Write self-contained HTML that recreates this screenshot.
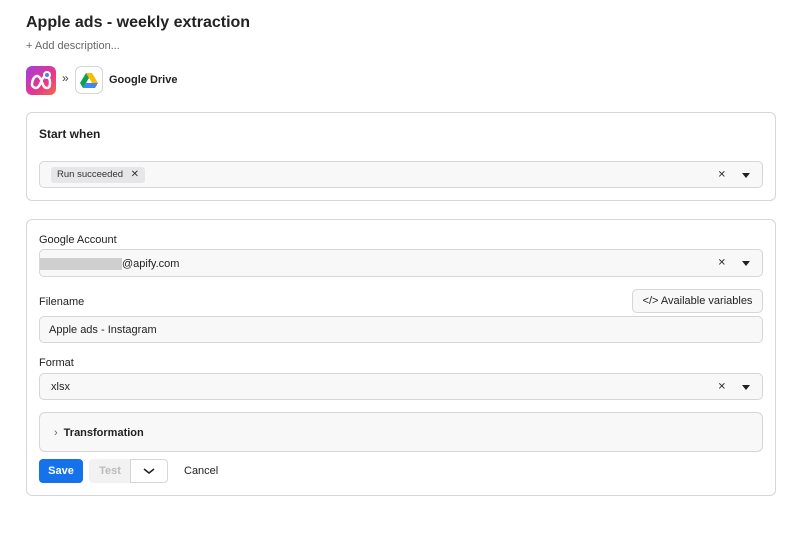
<!DOCTYPE html>
<html><head><style>
*{box-sizing:border-box;margin:0;padding:0}
body{width:802px;height:550px;background:#fff;font-family:"Liberation Sans",sans-serif;color:#1f1f1f;position:relative;overflow:hidden}
.abs{position:absolute}
h1{position:absolute;left:26px;top:14px;font-size:16px;font-weight:bold;color:#222}
.card{position:absolute;left:26px;width:750px;border:1px solid #d6d6da;border-radius:6px;background:#fff}
.inp{position:absolute;left:39px;width:724px;border:1px solid #d6d6da;border-radius:5px;background:#f8f8f9;font-size:11px;color:#222}
.lbl{position:absolute;left:39px;font-size:11px;color:#222}
.x{position:absolute;right:36px;top:50%;transform:translateY(-50%);font-size:10px;color:#333}
.caret{position:absolute;right:12px;top:50%;margin-top:-2px;width:0;height:0;border-left:4px solid transparent;border-right:4px solid transparent;border-top:5px solid #222}
</style></head><body>
<h1>Apple ads - weekly extraction</h1>
<div class="abs" style="left:26px;top:40px;font-size:11px;color:#666">+ Add description...</div>
<div class="abs" style="left:26px;top:66px;width:30px;height:29px;border-radius:6px;background:linear-gradient(135deg,#a13fe0,#e8378a 60%,#f06a4b)">
<svg width="30" height="29" viewBox="0 0 30 29"><path d="M6 19c0-6 3-9 5-9s4 3 5 6 2 6 5 6 3-3 3-6-2-6-4-6-4 3-5 6-3 6-5 6-4-2-4-3z" fill="none" stroke="#fff" stroke-width="2.5"/><circle cx="21" cy="9" r="4" fill="#fff"/><circle cx="21" cy="9" r="2" fill="#4c7ff0"/></svg></div>
<div class="abs" style="left:62px;top:71px;font-size:12px;color:#444">»</div>
<div class="abs" style="left:75px;top:66px;width:28px;height:28px;border:1px solid #d6d6da;border-radius:6px;background:#fff">
<svg width="26" height="26" viewBox="0 0 26 26"><path d="M10 6h6l6 10h-6z" fill="#fbbc04"/><path d="M10 6l-6 10 3 5 6-10z" fill="#0f9d58"/><path d="M7 21h12l3-5H10z" fill="#4285f4"/></svg></div>
<div class="abs" style="left:109px;top:74px;font-size:11px;font-weight:bold;color:#222">Google Drive</div>

<div class="card" style="top:112px;height:89px"></div>
<div class="abs" style="left:39px;top:127px;font-size:12px;font-weight:bold">Start when</div>
<div class="inp" style="top:161px;height:27px">
<div class="abs" style="left:11px;top:5px;height:16px;padding:0 6px;background:#e6e6e8;border-radius:3px;font-size:9.5px;line-height:16px;color:#333">Run succeeded <span style="margin-left:5px;font-size:10px">✕</span></div>
<span class="x">✕</span><span class="caret"></span></div>

<div class="card" style="top:219px;height:277px"></div>
<div class="lbl" style="top:234px">Google Account</div>
<div class="inp" style="top:249px;height:28px">
<div class="abs" style="left:0;top:8px;width:82px;height:12px;background:#cfcfcf"></div>
<div class="abs" style="left:82px;top:8px">@apify.com</div>
<span class="x">✕</span><span class="caret"></span></div>
<div class="lbl" style="top:296px">Filename</div>
<div class="abs" style="left:632px;top:289px;width:131px;height:24px;border:1px solid #d6d6da;border-radius:5px;background:#f8f8f9;font-size:11px;line-height:23px;text-align:center;color:#222">&lt;/&gt; Available variables</div>
<div class="inp" style="top:316px;height:27px"><div class="abs" style="left:9px;top:7px">Apple ads - Instagram</div></div>
<div class="lbl" style="top:357px">Format</div>
<div class="inp" style="top:373px;height:27px"><div class="abs" style="left:11px;top:7px">xlsx</div>
<span class="x">✕</span><span class="caret"></span></div>
<div class="inp" style="top:412px;height:40px;border-radius:6px"><div class="abs" style="left:14px;top:14px;font-size:11px;font-weight:bold"><span style="color:#666;font-weight:normal;margin-right:6px">›</span>Transformation</div></div>
<div class="abs" style="left:39px;top:459px;width:44px;height:24px;background:#1672eb;border-radius:4px;color:#fff;font-size:11px;font-weight:bold;line-height:24px;text-align:center">Save</div>
<div class="abs" style="left:89px;top:459px;width:42px;height:24px;background:#f2f2f3;border-radius:4px 0 0 4px;color:#bbb;font-size:11px;font-weight:bold;line-height:24px;text-align:center">Test</div>
<div class="abs" style="left:130px;top:459px;width:38px;height:24px;border:1px solid #d6d6da;border-radius:0 4px 4px 0">
<svg width="36" height="22" viewBox="0 0 36 22"><path d="M13 9l5 4 5-4" fill="none" stroke="#222" stroke-width="1.5"/></svg></div>
<div class="abs" style="left:184px;top:465px;font-size:11px;color:#222">Cancel</div>
</body></html>
